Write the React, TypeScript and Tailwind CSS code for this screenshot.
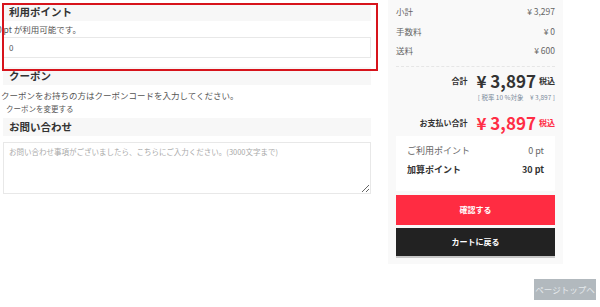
import React from "react";

const jp = { fontFamily: '"Noto Sans CJK JP", "Noto Sans", sans-serif' };

function SectionTitle({ children }: { children: React.ReactNode }) {
  return (
    <div className="h-[18px] bg-[#f7f7f7] pl-[6px] flex items-center">
      <span className="text-[10.5px] font-bold text-[#333] leading-none">{children}</span>
    </div>
  );
}

function Row({ label, value }: { label: string; value: string }) {
  return (
    <div className="h-[19.5px] flex items-center justify-between text-[8.5px] text-[#666]">
      <span>{label}</span>
      <span>{value}</span>
    </div>
  );
}

export default function App() {
  return (
    <div className="relative w-[600px] h-[307px] bg-white overflow-hidden" style={jp}>
      <div className="flex">
        {/* Left form column */}
        <div className="w-[368px] ml-[3px] pt-[3px]">
          <SectionTitle>利用ポイント</SectionTitle>
          <p className="-ml-[6px] mt-[2px] text-[8.5px] text-[#555] leading-[12px] whitespace-nowrap">0 pt が利用可能です。</p>
          <div className="mt-[2px] h-[21px] border border-[#e8e8e8] px-[5px] flex items-center text-[8px] text-[#555]">
            0
          </div>
          <div className="h-[9px]" />
          <SectionTitle>クーポン</SectionTitle>
          <p className="-ml-[2px] mt-[4px] text-[8.5px] text-[#555] leading-[12px]">
            クーポンをお持ちの方はクーポンコードを入力してください。
          </p>
          <p className="ml-[3px] mt-[2px] text-[7.5px] text-[#555] leading-[11px]">クーポンを変更する</p>
          <div className="h-[4px]" />
          <SectionTitle>お問い合わせ</SectionTitle>
          <textarea
            className="mt-[6px] block w-full h-[52px] border border-[#e8e8e8] px-[5px] py-[3px] text-[7.5px] leading-[12px] outline-none resize-y placeholder:text-[#aaa]"
            placeholder="お問い合わせ事項がございましたら、こちらにご入力ください。(3000文字まで)"
            style={jp}
          />
        </div>

        {/* Right summary panel */}
        <div className="ml-[17px] w-[175px] h-[264px] bg-[#f9f9f9] px-[8px] pt-[2px]">
          <Row label="小計" value="¥ 3,297" />
          <Row label="手数料" value="¥ 0" />
          <Row label="送料" value="¥ 600" />
          <div className="mt-[5px] border-t border-dashed border-[#e6e6e6]" />
          <div className="mt-[4px] h-[20px] flex items-center justify-end gap-[3px]">
            <span className="text-[8px] font-bold text-[#333] mr-[6px]">合計</span>
            <span className="text-[17px] font-bold text-[#333] leading-[20px]">¥ 3,897</span>
            <span className="text-[8px] font-bold text-[#333]">税込</span>
          </div>
          <div className="mt-[2px] text-right text-[6.5px] leading-[9px] text-[#7a8a99]">[ 税率 10 %対象　¥ 3,897 ]</div>
          <div className="mt-[11px] h-[20px] flex items-center justify-end gap-[3px]">
            <span className="text-[8px] font-bold text-[#333] mr-[6px]">お支払い合計</span>
            <span className="text-[17px] font-bold text-[#ff2d45] leading-[20px]">¥ 3,897</span>
            <span className="text-[8px] font-bold text-[#ff2d45]">税込</span>
          </div>
          <div className="mt-[3px] h-[55px] bg-white px-[11px] pt-[6px]">
            <div className="h-[19px] flex items-center justify-between text-[9px] text-[#666]">
              <span>ご利用ポイント</span>
              <span>0 pt</span>
            </div>
            <div className="h-[19px] flex items-center justify-between text-[9px] font-bold text-[#333]">
              <span>加算ポイント</span>
              <span>30 pt</span>
            </div>
          </div>
          <button className="mt-[4px] w-full h-[30px] bg-[#ff2c42] text-white text-[8px] font-bold">確認する</button>
          <button className="mt-[3px] w-full h-[30px] bg-[#222] text-white text-[8px] font-bold border-b-2 border-[#c8c8c8]">
            カートに戻る
          </button>
        </div>
      </div>

      {/* Highlight overlay */}
      <div className="absolute left-[2px] top-[3px] w-[376px] h-[68px] border-2 border-[#d7141c] pointer-events-none" />

      {/* Page top button */}
      <div className="absolute left-[534px] top-[279px] w-[62px] h-[21px] bg-[#b2b9be] flex items-center justify-center text-[8.5px] text-[#e6eaed] whitespace-nowrap">
        ページトップへ
      </div>
    </div>
  );
}
